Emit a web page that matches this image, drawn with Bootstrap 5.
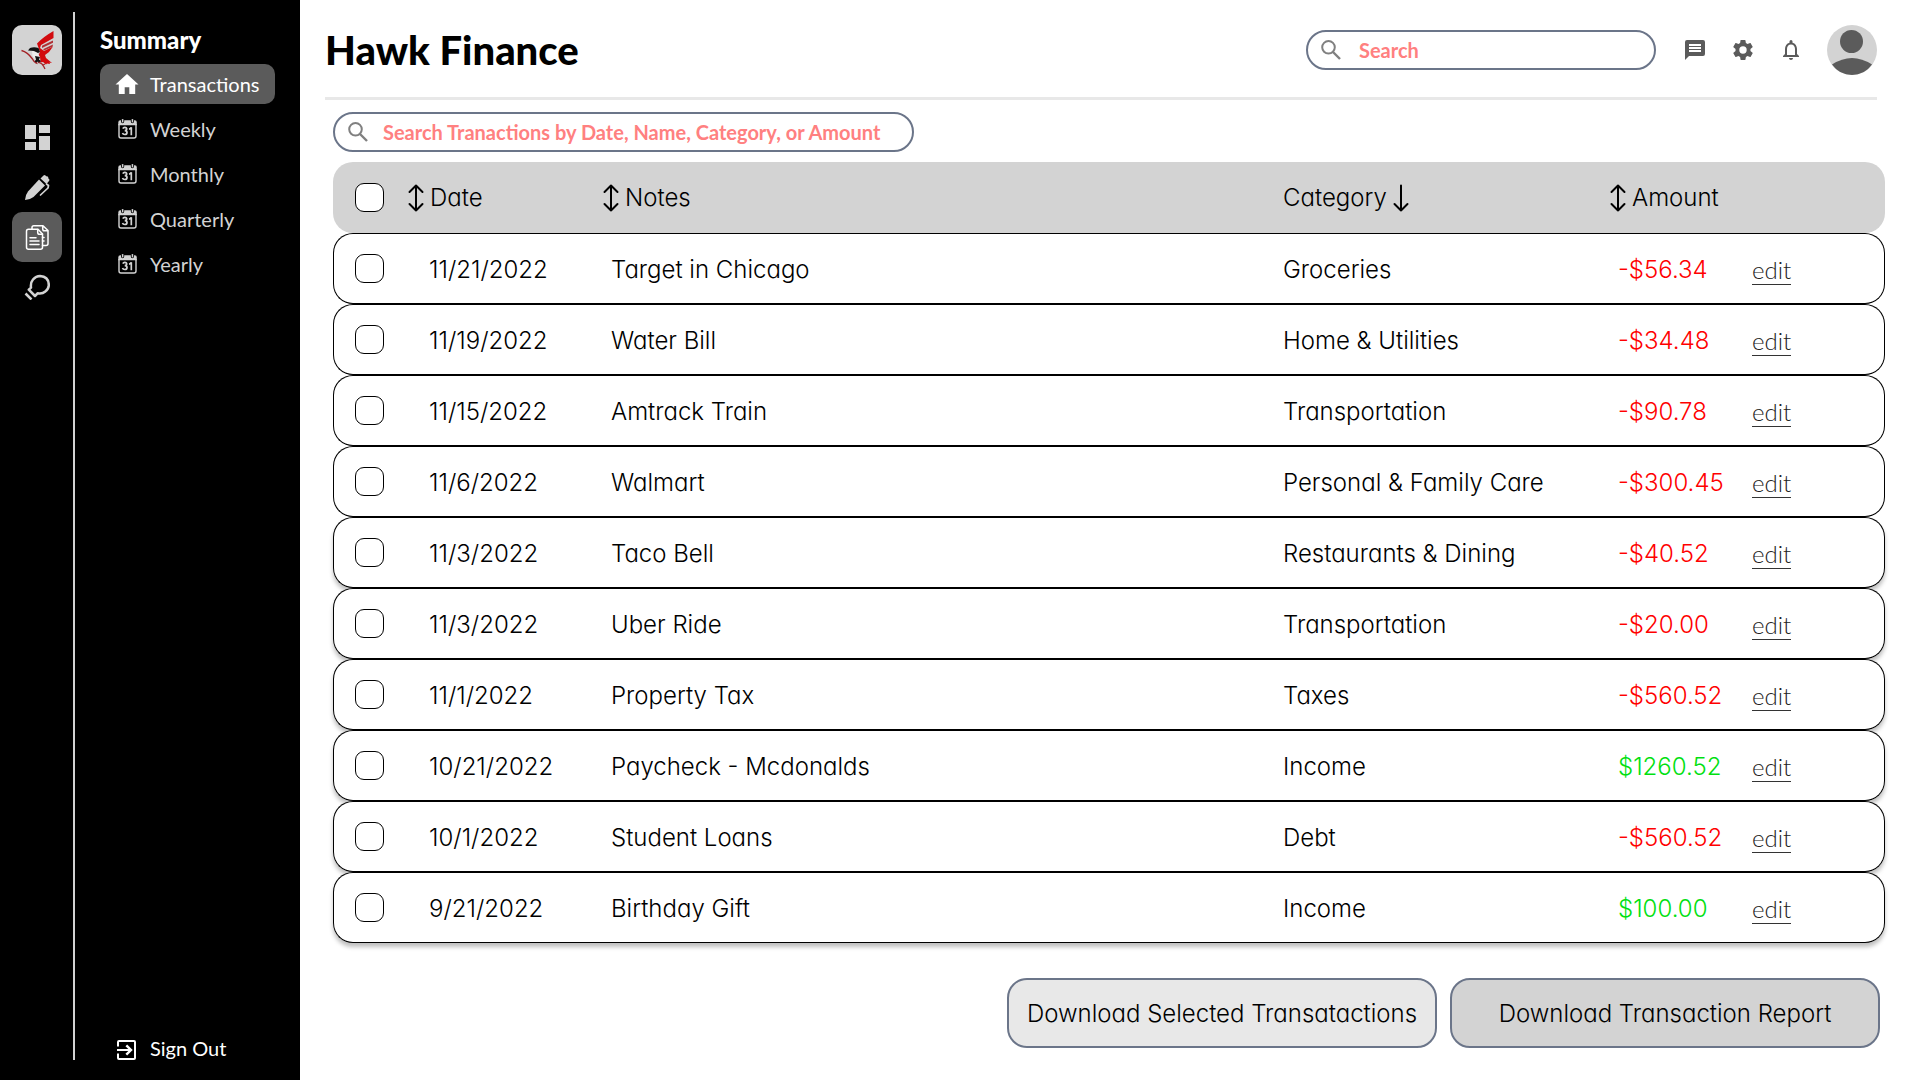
<!DOCTYPE html>
<html lang="en">
<head>
<meta charset="utf-8">
<meta name="viewport" content="width=device-width, initial-scale=1">
<title>Hawk Finance</title>
<link href="https://cdn.jsdelivr.net/npm/bootstrap@5.3.0/dist/css/bootstrap.min.css" rel="stylesheet">
<style>
  body { font-family: Lato, sans-serif; background: #fff; color: #000; }
  .sidebar { width: 300px; background: #000; color: #d3d3d3; }
  .rail { width: 75px; padding: 25px 11px 0 12px; }
  .rail-wrap { padding: 12px 0 20px; }
  .rail-line { width: 2px; background: #d3d3d3; margin-left: -2px; }
  .rail-tile { width: 50px; height: 50px; border-radius: 10px; color: #d3d3d3; }
  .rail-tile.brand { background: #d3d3d3; margin-bottom: 37px; }
  .rail-tile.active { background: #5b5b5b; color: #fff; }
  .menu { padding: 24px 25px 12px; }
  .menu h2 { font-size: 24px; line-height: 32px; font-weight: 900; color: #fff; margin-bottom: 8px; }
  .menu-list { gap: 5px; }
  .menu-link { height: 40px; border-radius: 10px; padding: 0 15px; gap: 10px; font-size: 20px; line-height: 24px; color: #d3d3d3; text-decoration: none; }
  .menu-link svg { width: 25px; height: 24px; flex: none; }
  .menu-link.active { background: #5b5b5b; color: #fff; }
  .menu-link.out { color: #fff; }
  .main { padding: 25px 35px 32px 25px; }
  .topbar { border-bottom: 3px solid #e8e8e8; padding-bottom: 22px; margin-right: 8px; }
  .topbar h1 { font-size: 40px; line-height: 50px; font-weight: 900; }
  .search-box { height: 40px; border: 2px solid #6b7589; border-radius: 20px; padding: 0 13px; color: #808080; }
  .search-box input { border: 0; outline: 0; background: none; font-size: 20px; line-height: 24px; font-weight: 700; color: #ff8080; }
  .search-box input::placeholder { color: #ff8080; opacity: 1; }
  .search-top { width: 350px; gap: 18px; }
  .search-wide { width: 581px; gap: 15px; }
  .tools { margin-left: 27px; }
  .icon-btn { border: 0; background: none; padding: 0; color: #5b5b5b; width: 24px; height: 24px; }
  .content { padding: 12px 0 0 8px; }
  .ledger { border-collapse: separate; border-spacing: 0; table-layout: fixed; margin-top: 10px; font-family: Inter, sans-serif; font-feature-settings: "cv11"; font-size: 24px; line-height: 30px; font-weight: 300; }
  .col-tick { width: 96px; }
  .col-date { width: 182px; }
  .col-category { width: 335px; }
  .col-amount { width: 134px; }
  .col-edit { width: 133px; }
  .ledger th { font-weight: 300; background: #d3d3d3; height: 71px; padding: 0; }
  .ledger td { height: 71px; padding: 2px 0 0; border: solid #000; border-width: 1px 0; background: #fff; }
  .ledger tr > :first-child { border-radius: 20px 0 0 20px; padding: 0 0 0 22px; }
  .ledger tr > :last-child { border-radius: 0 20px 20px 0; }
  .ledger td:first-child { border-left-width: 1px; padding: 0 0 0 21px; }
  .ledger td:last-child { border-right-width: 1px; padding: 0; }
  .ledger tbody tr { border-radius: 20px; }
  .ledger tbody tr.raised { box-shadow: 0 4px 4px rgba(0,0,0,.25); }
  .tick { appearance: none; display: block; width: 29px; height: 29px; margin: 0; border: 1px solid #000; border-radius: 9px; background: #fff; }
  .tick:checked { background: #5b5b5b; }
  .sort { border: 0; background: none; padding: 0; font: inherit; font-feature-settings: inherit; color: inherit; display: flex; align-items: center; gap: 6px; }
  .sort.lead-arrow { margin-left: -21px; }
  .sort.notes-arrow { margin-left: -8px; }
  .sort.amount-arrow { margin-left: -8px; }
  .debit { color: #f00; }
  .credit { color: #00e010; }
  .edit { font-family: Lato, sans-serif; font-weight: 300; color: #222; text-decoration: none; border-bottom: 1px solid #333; display: inline-block; line-height: 29px; margin-top: 3px; }
  .actions { padding-right: 5px; gap: 13px; }
  .action { width: 430px; height: 70px; border: 2px solid #6b7589; border-radius: 20px; background: #d3d3d3; color: #000; font-family: Inter, sans-serif; font-feature-settings: "cv11"; font-weight: 300; font-size: 24px; line-height: 30px; padding: 2px 0 0; }
  .action.pale { background: #e8e8e8; }
</style>
</head>
<body>
<svg class="d-none" xmlns="http://www.w3.org/2000/svg">
  <symbol id="cal" viewBox="0 0 25 24"><path fill="none" stroke="currentColor" stroke-width="1.4" d="M4 7v12q0 2 2 2h13q2 0 2-2V7"/><path fill="currentColor" d="M3.300 8.200V5.200q0-2 2-2H6v1.300q0 1.700 1.600 1.700T9.200 4.500V3.200h6.600v1.300q0 1.700 1.600 1.700T19 4.500V3.200h.8q2 0 2 2v3z"/><rect x="6.900" y="1.900" width="1.500" height="3.600" rx=".7" fill="currentColor"/><rect x="16.700" y="1.900" width="1.500" height="3.600" rx=".7" fill="currentColor"/><path fill="none" stroke="currentColor" stroke-width="1.700" d="M7.800 11.600q.6-1.200 2-1.200 1.900 0 1.900 1.700 0 1.500-2 1.500 2.300 0 2.300 1.900 0 2-2.200 2-1.800 0-2.300-1.500M14 12.100q1.800-.2 2.300-1.800v7.900"/></symbol>
  <symbol id="updown" viewBox="0 0 16 28"><path fill="none" stroke="currentColor" stroke-width="2" stroke-linecap="round" stroke-linejoin="round" d="M8 1.500v25M1.500 8 8 1.500 14.500 8M1.500 20 8 26.500l6.500-6.500"/></symbol>
  <symbol id="down" viewBox="0 0 16 28"><path fill="none" stroke="currentColor" stroke-width="2" stroke-linecap="round" stroke-linejoin="round" d="M8 1.500v25M1.500 20 8 26.500l6.500-6.500"/></symbol>
  <symbol id="lens" viewBox="0 0 20 20"><circle cx="7.500" cy="7.300" r="6.300" fill="none" stroke="currentColor" stroke-width="2"/><path stroke="currentColor" stroke-width="2.400" d="m12 12 7 7"/></symbol>
</svg>
<div class="d-flex min-vh-100">
  <aside class="sidebar d-flex flex-shrink-0">
    <nav class="rail" aria-label="Sections">
      <a href="#" class="rail-tile brand d-flex align-items-center justify-content-center" aria-label="Home">
        <svg width="50" height="50" viewBox="0 0 50 50"><path fill="#d20a0e" d="M41.500 6v7L29 20l-1 3 4 3 9-4.500L37 27l-4 3 1 3 6 5-2.500-.500.500 1.500-3-.500-1 1-3-2.500-2.500.500L26 31l2-4-3-8.500Q31 12 41.500 6z"/><path fill="#b03034" d="m30 20.800 11-5.300v2.300L30 23zM31.500 24l9.500-4.500-.500 2.300-9 4z"/><path fill="#ececec" d="m20 26 5 1 3 5 .500 5-4-1-4-5z"/><path fill="#111" d="m16 25.500 2-2.500q4-1.500 8.500 0l1.500 4-2 1-4-2zM23 31l5 1-1 2.500 2 1.500-2 2.500-1.500-2-1.500 2-1.500-2 1.500-2z"/><path fill="none" stroke="#a32226" stroke-width="1.300" d="M9.500 25.500q6 1.500 11 8.500 2 4 5 4.500M26.500 37l3.500 2 1.500 2 1.500 3M31 40l2-1"/></svg>
      </a>
      <a href="#" class="rail-tile d-flex align-items-center justify-content-center" aria-label="Dashboard"><svg width="26" height="26" viewBox="0 0 26 26" fill="currentColor"><path d="M1 1h11v14H1zM15 1h11v8H15zM1 18h11v8H1zM15 12h11v14H15z"/></svg></a>
      <a href="#" class="rail-tile d-flex align-items-center justify-content-center" aria-label="Write"><svg width="26" height="26" viewBox="0 0 26 26"><path fill="currentColor" d="m15 5.500 6 6L9.500 23Q6 25.800 1 26q.200-5 3-8.500z"/><path fill="currentColor" d="m16.500 4.500 3-3q1-.800 2 0l1 1 .500-.500 1.500 1.500-.500.500 1 1q1 1 0 2l-2.500 3z"/><path fill="none" stroke="currentColor" stroke-width="1.700" stroke-linecap="round" stroke-linejoin="round" d="m22.500 10 2 1.500-.500 2.500-7.500 7"/></svg></a>
      <a href="#" class="rail-tile active d-flex align-items-center justify-content-center" aria-label="Documents"><svg width="26" height="26" viewBox="0 0 26 26" fill="none" stroke="currentColor" stroke-width="1.500" stroke-linejoin="round" stroke-linecap="round"><path d="M4.500 5.300H14l4.500 4.700v13.200q0 2-2 2h-12q-2 0-2-2V7.300q0-2 2-2z"/><path d="M13.700 5.500v3q0 1.800 1.800 1.800h3M8 5V3.500q0-1.800 1.800-1.800H19l5 4.800v13q0 2-2 2h-3.500M18.700 2v3q0 1.800 1.800 1.800h3M6 13.700h6M6 17h9M6 20.500h9M18.500 13.500H20M18.500 17H20"/></svg></a>
      <a href="#" class="rail-tile d-flex align-items-center justify-content-center" aria-label="Ideas"><svg width="26" height="26" viewBox="0 0 26 26" fill="none" stroke="currentColor" stroke-width="2.500" stroke-linejoin="round"><path d="m4.800 15.700 2.200-2q-.700-5 2-8.200 3-3.500 7-3.500 9 .500 8.800 9.500-.500 4-3.500 6-3 2.500-7.500 1.700L11 22zM4.800 15.700 11 22M1.500 19.500l6 6"/></svg></a>
    </nav>
    <div class="rail-wrap d-flex"><div class="rail-line"></div></div>
    <nav class="menu d-flex flex-column flex-grow-1" aria-label="Summary">
      <h2 class="mt-0">Summary</h2>
      <div class="menu-list d-flex flex-column">
        <a href="#" class="menu-link active d-flex align-items-center"><svg viewBox="0 0 25 24"><path fill="currentColor" d="M12 2 23.500 12.500h-3.300V22h-5.900v-6.800H9.700V22H3.800v-9.500H.500z"/></svg>Transactions</a>
        <a href="#" class="menu-link d-flex align-items-center"><svg><use href="#cal"/></svg>Weekly</a>
        <a href="#" class="menu-link d-flex align-items-center"><svg><use href="#cal"/></svg>Monthly</a>
        <a href="#" class="menu-link d-flex align-items-center"><svg><use href="#cal"/></svg>Quarterly</a>
        <a href="#" class="menu-link d-flex align-items-center"><svg><use href="#cal"/></svg>Yearly</a>
      </div>
      <a href="#" class="menu-link out d-flex align-items-center mt-auto"><svg viewBox="0 0 25 24" fill="none" stroke="currentColor" stroke-width="2"><path d="M3 10.500V6q0-1 1-1h15q1 0 1 1v16q0 1-1 1H4q-1 0-1-1v-4.500M2 14h14"/><path stroke-width="2.400" d="m11.300 9.300 4.700 4.700-4.700 4.700"/></svg>Sign Out</a>
    </nav>
  </aside>
  <main class="main flex-grow-1 d-flex flex-column">
    <header class="topbar d-flex align-items-center">
      <h1 class="mb-0 me-auto">Hawk Finance</h1>
      <label class="search-box search-top d-flex align-items-center"><svg width="20" height="20"><use href="#lens"/></svg><input class="flex-grow-1 p-0" type="search" placeholder="Search" aria-label="Search"></label>
      <div class="tools d-flex align-items-center">
        <button class="icon-btn" aria-label="Messages"><svg width="24" height="24" viewBox="0 0 24 24" fill="currentColor" class="d-block"><path d="M20 2H4a2 2 0 0 0-2 2v18l4-4h14a2 2 0 0 0 2-2V4a2 2 0 0 0-2-2zm-2 12H6v-2h12zm0-3H6V9h12zm0-3H6V6h12z"/></svg></button>
        <button class="icon-btn ms-4" aria-label="Settings"><svg width="24" height="24" viewBox="0 0 24 24" fill="currentColor" class="d-block"><path d="M19.430 12.980c.040-.320.070-.640.070-.980s-.030-.660-.070-.980l2.110-1.650c.190-.150.240-.420.120-.640l-2-3.460c-.120-.220-.390-.300-.610-.220l-2.490 1c-.520-.400-1.080-.730-1.690-.980l-.380-2.650A.488.488 0 0 0 14 2h-4c-.250 0-.460.180-.490.420l-.380 2.650c-.610.250-1.170.590-1.690.980l-2.490-1c-.230-.090-.490 0-.610.220l-2 3.460c-.130.220-.070.490.120.640l2.110 1.650c-.040.320-.070.650-.070.980s.030.660.070.980l-2.110 1.650c-.190.150-.240.420-.120.640l2 3.460c.120.220.390.300.610.220l2.490-1c.520.400 1.080.730 1.690.980l.380 2.650c.030.240.240.420.490.420h4c.250 0 .460-.180.490-.420l.380-2.650c.610-.250 1.170-.590 1.690-.980l2.490 1c.230.090.490 0 .610-.220l2-3.460c.120-.220.070-.490-.120-.640zM12 15.700a3.700 3.700 0 1 1 0-7.400 3.700 3.700 0 0 1 0 7.400z"/></svg></button>
        <button class="icon-btn ms-4" aria-label="Notifications"><svg width="24" height="24" viewBox="0 0 24 24" fill="currentColor" class="d-block"><path d="M12 22c1.100 0 2-.900 2-2h-4c0 1.100.900 2 2 2zm6-6v-5c0-3.070-1.630-5.640-4.500-6.320V3.500a1.500 1.500 0 0 0-3 0v1.180C7.640 5.360 6 7.920 6 11v5l-2 2v1h16v-1zm-2 1H8v-6c0-2.480 1.510-4.500 4-4.500s4 2.020 4 4.500z"/></svg></button>
        <button class="border-0 bg-transparent p-0 ms-4" aria-label="Account"><svg width="50" height="50" viewBox="0 0 50 50" class="d-block"><circle cx="25" cy="25" r="25" fill="#d3d3d3"/><circle cx="24.500" cy="16.500" r="11.500" fill="#5b5b5b"/><path fill="#5b5b5b" d="M5 39.500q20-13 40 0Q37.500 50 25 50T5 39.500z"/></svg></button>
      </div>
    </header>
    <div class="content d-flex flex-column flex-grow-1">
      <label class="search-box search-wide d-flex align-items-center"><svg width="20" height="20"><use href="#lens"/></svg><input class="flex-grow-1 p-0" type="search" placeholder="Search Tranactions by Date, Name, Category, or Amount" aria-label="Search transactions"></label>
      <table class="ledger w-100 mb-0">
        <colgroup><col class="col-tick"><col class="col-date"><col><col class="col-category"><col class="col-amount"><col class="col-edit"></colgroup>
        <thead><tr>
          <th><input class="tick" type="checkbox" aria-label="Select all"></th>
          <th><button class="sort lead-arrow"><svg width="16" height="28"><use href="#updown"/></svg>Date</button></th>
          <th><button class="sort notes-arrow"><svg width="16" height="28"><use href="#updown"/></svg>Notes</button></th>
          <th><button class="sort">Category<svg width="16" height="28"><use href="#down"/></svg></button></th>
          <th><button class="sort amount-arrow"><svg width="16" height="28"><use href="#updown"/></svg>Amount</button></th>
          <th></th>
        </tr></thead>
        <tbody>
          <tr><td><input class="tick" type="checkbox" aria-label="Select Target in Chicago"></td><td>11/21/2022</td><td>Target in Chicago</td><td>Groceries</td><td class="debit">-$56.34</td><td><a class="edit" href="#">edit</a></td></tr>
          <tr><td><input class="tick" type="checkbox" aria-label="Select Water Bill"></td><td>11/19/2022</td><td>Water Bill</td><td>Home &amp; Utilities</td><td class="debit">-$34.48</td><td><a class="edit" href="#">edit</a></td></tr>
          <tr><td><input class="tick" type="checkbox" aria-label="Select Amtrack Train"></td><td>11/15/2022</td><td>Amtrack Train</td><td>Transportation</td><td class="debit">-$90.78</td><td><a class="edit" href="#">edit</a></td></tr>
          <tr><td><input class="tick" type="checkbox" aria-label="Select Walmart"></td><td>11/6/2022</td><td>Walmart</td><td>Personal &amp; Family Care</td><td class="debit">-$300.45</td><td><a class="edit" href="#">edit</a></td></tr>
          <tr class="raised"><td><input class="tick" type="checkbox" aria-label="Select Taco Bell"></td><td>11/3/2022</td><td>Taco Bell</td><td>Restaurants &amp; Dining</td><td class="debit">-$40.52</td><td><a class="edit" href="#">edit</a></td></tr>
          <tr class="raised"><td><input class="tick" type="checkbox" aria-label="Select Uber Ride"></td><td>11/3/2022</td><td>Uber Ride</td><td>Transportation</td><td class="debit">-$20.00</td><td><a class="edit" href="#">edit</a></td></tr>
          <tr class="raised"><td><input class="tick" type="checkbox" aria-label="Select Property Tax"></td><td>11/1/2022</td><td>Property Tax</td><td>Taxes</td><td class="debit">-$560.52</td><td><a class="edit" href="#">edit</a></td></tr>
          <tr class="raised"><td><input class="tick" type="checkbox" aria-label="Select Paycheck"></td><td>10/21/2022</td><td>Paycheck - Mcdonalds</td><td>Income</td><td class="credit">$1260.52</td><td><a class="edit" href="#">edit</a></td></tr>
          <tr class="raised"><td><input class="tick" type="checkbox" aria-label="Select Student Loans"></td><td>10/1/2022</td><td>Student Loans</td><td>Debt</td><td class="debit">-$560.52</td><td><a class="edit" href="#">edit</a></td></tr>
          <tr class="raised"><td><input class="tick" type="checkbox" aria-label="Select Birthday Gift"></td><td>9/21/2022</td><td>Birthday Gift</td><td>Income</td><td class="credit">$100.00</td><td><a class="edit" href="#">edit</a></td></tr>
        </tbody>
      </table>
      <div class="actions d-flex justify-content-end mt-auto">
        <button class="action pale">Download Selected Transatactions</button>
        <button class="action">Download Transaction Report</button>
      </div>
    </div>
  </main>
</div>
<script src="https://cdn.jsdelivr.net/npm/bootstrap@5.3.0/dist/js/bootstrap.bundle.min.js"></script>
</body>
</html>
